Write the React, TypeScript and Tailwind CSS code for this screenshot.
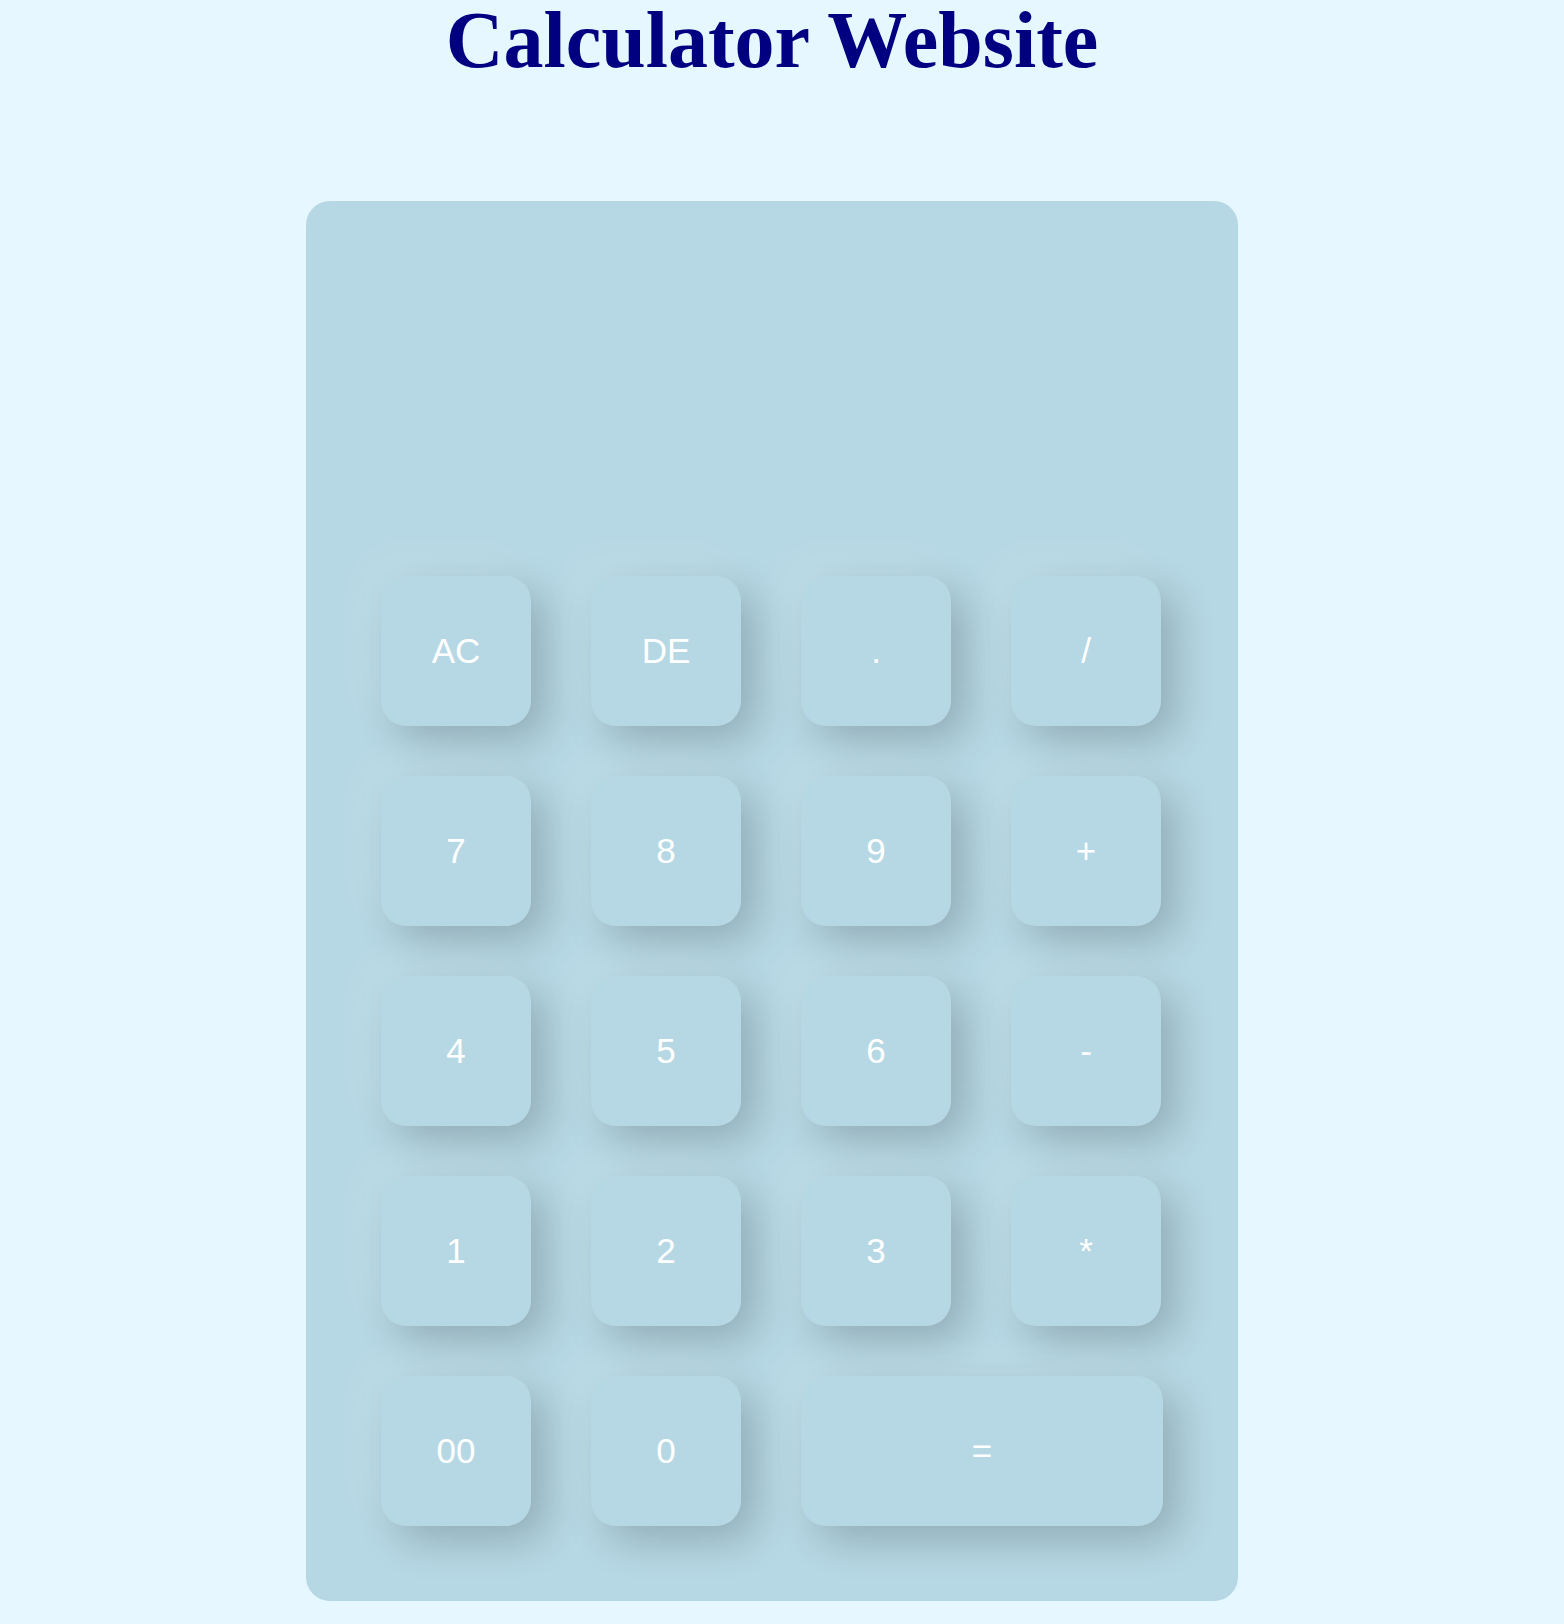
import React, { useState } from "react";

const keys = [
  "AC", "DE", ".", "/",
  "7", "8", "9", "+",
  "4", "5", "6", "-",
  "1", "2", "3", "*",
  "00", "0",
];

function App() {
  const [display, setDisplay] = useState("");

  const handleKey = (key: string) => {
    if (key === "AC") setDisplay("");
    else if (key === "DE") setDisplay(display.slice(0, -1));
    else setDisplay(display + key);
  };

  const handleEqual = () => {
    try {
      // eslint-disable-next-line no-new-func
      setDisplay(String(Function(`return (${display})`)()));
    } catch {
      setDisplay("Error");
    }
  };

  const btn =
    "w-[150px] h-[150px] rounded-[25px] bg-[#b6d8e4] text-white text-[35px] font-['Liberation_Sans',Arial,sans-serif] shadow-[15px_15px_40px_rgba(0,0,0,0.2),-15px_-15px_40px_rgba(255,255,255,0.12)] outline-none";

  return (
    <div className="min-h-screen bg-[#e6f7ff] flex flex-col items-center pr-[20px] pb-[23px]">
      <h1 className="text-[80px] leading-[88px] -mt-[4px] font-bold text-[#000080] font-['Liberation_Serif','Times_New_Roman',serif]">
        Calculator Website
      </h1>
      <div className="mt-[117px] w-[932px] h-[1400px] rounded-3xl bg-[#b6d8e4] p-[75px]">
        <div className="h-[300px] flex items-end justify-end pb-[30px] text-white text-[48px] font-['Liberation_Sans',Arial,sans-serif] overflow-hidden">
          {display}
        </div>
        <div className="grid grid-cols-[150px_150px_150px_150px] gap-x-[60px] gap-y-[50px]">
          {keys.map((key) => (
            <button key={key} type="button" className={btn} onClick={() => handleKey(key)}>
              {key}
            </button>
          ))}
          <button
            type="button"
            className={`${btn} col-span-2 w-[362px]`}
            onClick={handleEqual}
          >
            =
          </button>
        </div>
      </div>
    </div>
  );
}

export default App;
